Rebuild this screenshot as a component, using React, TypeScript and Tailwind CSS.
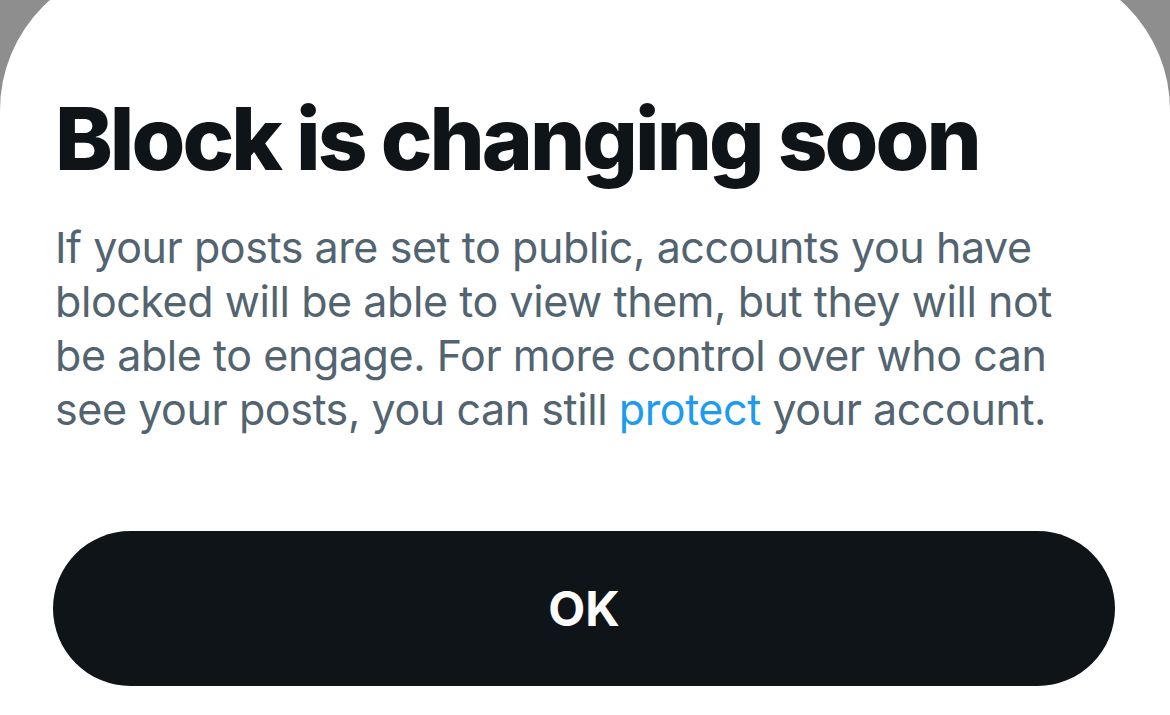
import React from 'react';

const lines = [
  'If your posts are set to public, accounts you have',
  'blocked will be able to view them, but they will not',
  'be able to engage. For more control over who can',
];

const App = () => {
  return (
    <div className="w-[1170px] h-[715px] overflow-hidden bg-[#8e8e8e]" style={{ fontFamily: 'Inter, "Noto Sans", sans-serif' }}>
      <div className="-mt-[36px] h-[751px] bg-white rounded-t-[146px] pt-[131px] px-[55px]">
        <h1 className="text-[87px] leading-none font-extrabold tracking-[-0.034em] text-[#0f1419]">
          Block is changing soon
        </h1>
        <p className="mt-[38px] text-[43px] leading-[54px] tracking-[-0.01em] text-[#536471] whitespace-nowrap">
          {lines.map((l) => (
            <span key={l} className="block">{l}</span>
          ))}
          <span className="block">
            see your posts, you can still <span className="text-[#1d9bf0]">protect</span> your account.
          </span>
        </p>
        <button className="mt-[95px] w-[1062px] h-[155px] -ml-[2px] rounded-[78px] bg-[#0f1419] text-white text-[48px] font-bold flex items-center justify-center">
          OK
        </button>
      </div>
    </div>
  );
};

export default App;
